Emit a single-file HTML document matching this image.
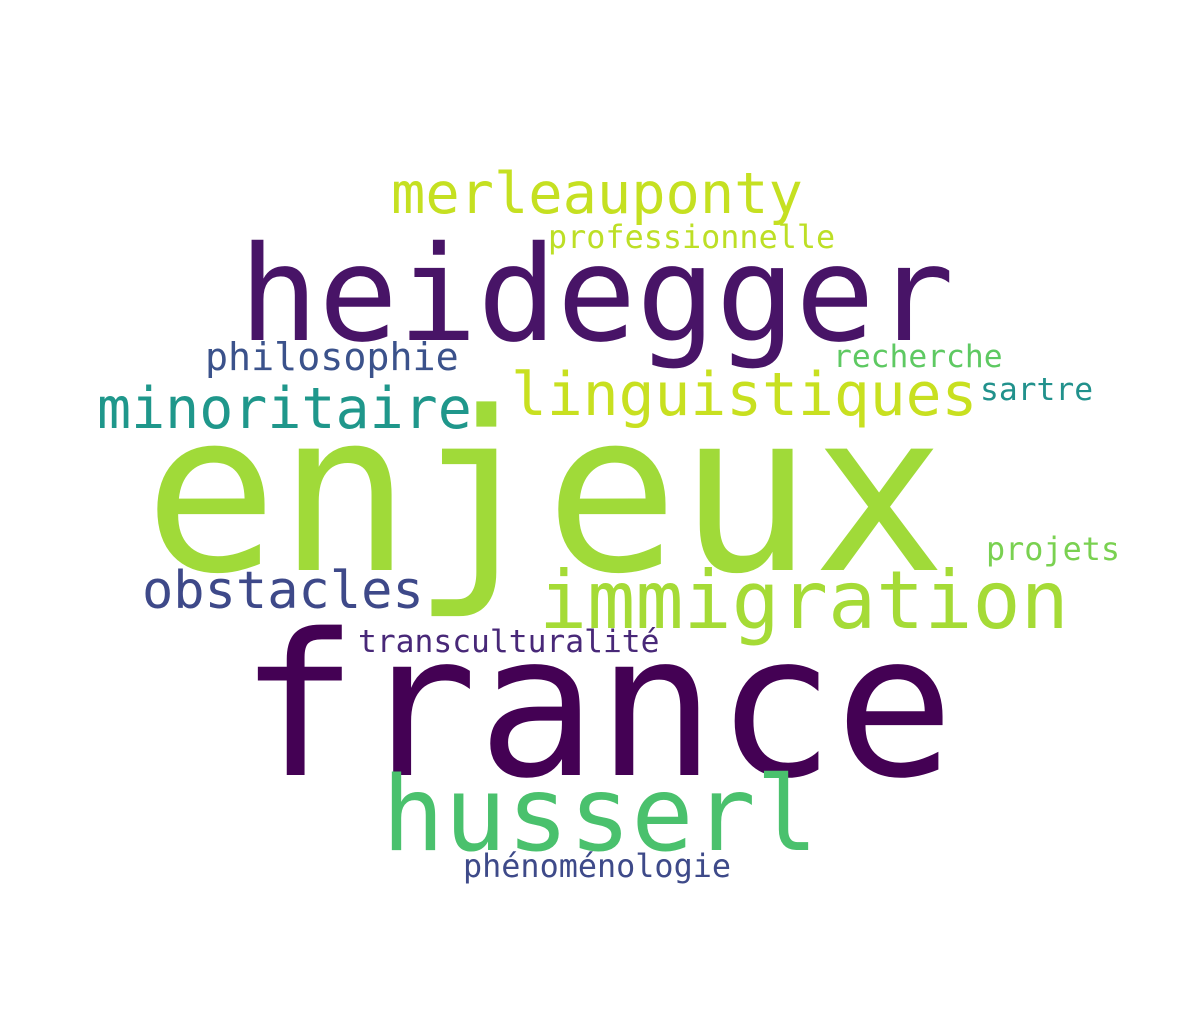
<!DOCTYPE html>
<html><head><meta charset="utf-8"><style>
html,body{margin:0;padding:0;background:#fff;}
svg{display:block}
text{font-family:"DejaVu Sans Mono","Liberation Mono",monospace;}
</style></head><body>
<svg width="1190" height="1028" viewBox="0 0 1190 1028" xmlns="http://www.w3.org/2000/svg">
<rect width="1190" height="1028" fill="#fff"/>
<text x="144" y="570" font-size="222" fill="#a0da39">enjeux</text>
<text x="239" y="775" font-size="198" fill="#440154">france</text>
<text x="239" y="340" font-size="132" fill="#481467">heidegger</text>
<text x="382" y="850" font-size="103.5" fill="#4ac16d">husserl</text>
<text x="539" y="628" font-size="80" fill="#a5db36">immigration</text>
<text x="511" y="415" font-size="59.6" fill="#c8e020">linguistiques</text>
<text x="97" y="428" font-size="56.6" fill="#1f978b">minoritaire</text>
<text x="391" y="213" font-size="57" fill="#c5e021">merleauponty</text>
<text x="142" y="608" font-size="52" fill="#3e4989">obstacles</text>
<text x="205" y="370" font-size="38.3" fill="#3b528b">philosophie</text>
<text x="548" y="248" font-size="31.8" fill="#bddf26">professionnelle</text>
<text x="833" y="367" font-size="31.3" fill="#5ec962">recherche</text>
<text x="980" y="400" font-size="31.3" fill="#21918c">sartre</text>
<text x="986" y="560" font-size="31.8" fill="#7ad151">projets</text>
<text x="358" y="652" font-size="31.3" fill="#482878">transculturalité</text>
<text x="463" y="877" font-size="31.8" fill="#3e4a89">phénoménologie</text>
</svg>
</body></html>
